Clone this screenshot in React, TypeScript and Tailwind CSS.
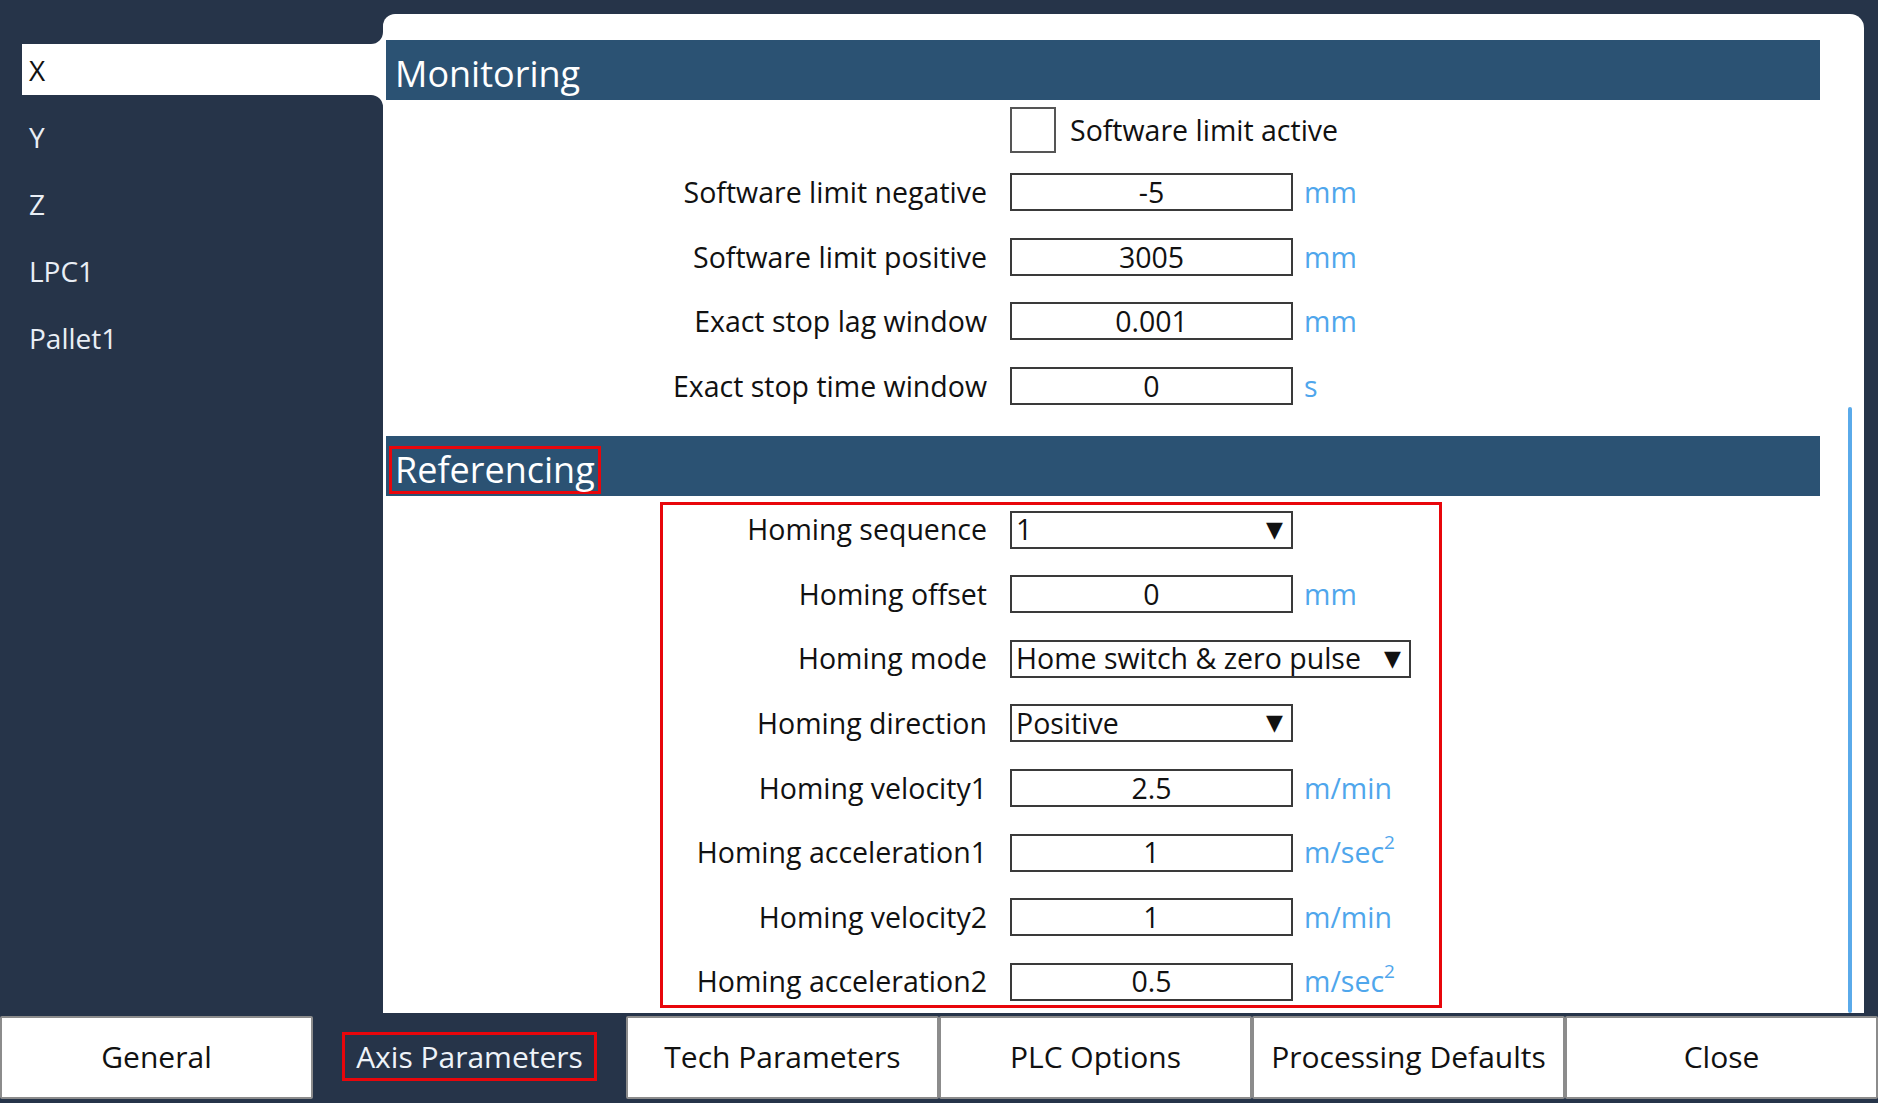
import React from "react";

const axes = ["X", "Y", "Z", "LPC1", "Pallet1"];

interface Field {
  label: string;
  value: string;
  unit?: string;
  kind?: "input" | "select";
  wide?: boolean;
}

const monitoring: Field[] = [
  { label: "Software limit negative", value: "-5", unit: "mm" },
  { label: "Software limit positive", value: "3005", unit: "mm" },
  { label: "Exact stop lag window", value: "0.001", unit: "mm" },
  { label: "Exact stop time window", value: "0", unit: "s" },
];

const referencing: Field[] = [
  { label: "Homing sequence", value: "1", kind: "select" },
  { label: "Homing offset", value: "0", unit: "mm" },
  { label: "Homing mode", value: "Home switch & zero pulse", kind: "select", wide: true },
  { label: "Homing direction", value: "Positive", kind: "select" },
  { label: "Homing velocity1", value: "2.5", unit: "m/min" },
  { label: "Homing acceleration1", value: "1", unit: "m/sec2" },
  { label: "Homing velocity2", value: "1", unit: "m/min" },
  { label: "Homing acceleration2", value: "0.5", unit: "m/sec2" },
];

const tabs = ["General", "Axis Parameters", "Tech Parameters", "PLC Options", "Processing Defaults", "Close"];

function Unit({ unit }: { unit?: string }) {
  if (!unit) return null;
  if (unit === "m/sec2") {
    return (
      <span className="ml-[11px] text-[#4fa6ec] flex items-start">
        m/sec<span className="text-[19px] leading-none mt-[2px]">2</span>
      </span>
    );
  }
  return <span className="ml-[11px] text-[#4fa6ec]">{unit}</span>;
}

function FieldRow({ field }: { field: Field }) {
  return (
    <div className="flex items-center h-[64.6px]">
      <div className="w-[601px] shrink-0 text-right text-[#111]">{field.label}</div>
      <div className="ml-[23px] flex items-center">
        {field.kind === "select" ? (
          <div
            className={`h-[38px] border-2 border-[#3a3a3a] bg-white flex items-center justify-between pl-[4px] pr-[8px] text-[#111] ${
              field.wide ? "w-[401px]" : "w-[283px]"
            }`}
          >
            <span>{field.value}</span>
            <span className="text-[22px] leading-none" style={{ fontFamily: "'DejaVu Sans', sans-serif" }}>
              ▼
            </span>
          </div>
        ) : (
          <div className="w-[283px] h-[38px] border-2 border-[#3a3a3a] bg-white flex items-center justify-center text-[#111]">
            {field.value}
          </div>
        )}
        <Unit unit={field.unit} />
      </div>
    </div>
  );
}

function SectionHeader({ title, boxed }: { title: string; boxed?: boolean }) {
  return (
    <div className="h-[60px] bg-[#2b5273] flex items-center pl-[3px] pt-[8px] text-white text-[36px]">
      <span className={boxed ? "border-[3px] border-[#e8060b] px-[3px] leading-[42px]" : "pl-[6px]"}>{title}</span>
    </div>
  );
}

function AxisItem({ name, selected }: { name: string; selected: boolean }) {
  if (!selected) {
    return (
      <div className="h-[67px] flex items-center pl-[29px] text-[#e9eef5]">{name}</div>
    );
  }
  return (
    <div className="h-[67px] py-[8px] relative">
      <div className="h-full ml-[22px] bg-white flex items-center pl-[7px] text-[#111]">{name}</div>
      {/* concave corners joining the tab into the panel */}
      <div className="absolute right-0 top-[-4px] w-[12px] h-[12px] bg-white">
        <div className="w-full h-full bg-[#263449] rounded-br-[12px]" />
      </div>
      <div className="absolute right-0 bottom-[-4px] w-[12px] h-[12px] bg-white">
        <div className="w-full h-full bg-[#263449] rounded-tr-[12px]" />
      </div>
    </div>
  );
}

export default function App() {
  return (
    <div
      className="w-[1878px] h-[1103px] bg-[#263449] flex flex-col overflow-hidden text-[28.5px]"
      style={{ fontFamily: "'Open Sans', sans-serif" }}
    >
      <div className="flex flex-1 min-h-0">
        {/* Axis list */}
        <div className="w-[383px] shrink-0 pt-[36px] text-[28px]">
          {axes.map((a, i) => (
            <AxisItem key={a} name={a} selected={i === 0} />
          ))}
        </div>

        {/* Parameter panel */}
        <div className="w-[1481px] mt-[14px] bg-white rounded-t-[14px] rounded-tl-[12px] relative pl-[3px] pr-[44px] pt-[26px]">
          <SectionHeader title="Monitoring" />
          <div className="flex items-center h-[60px]">
            <div className="w-[601px] shrink-0" />
            <div className="ml-[23px] w-[46px] h-[46px] border-2 border-[#555] bg-white" />
            <span className="ml-[14px] text-[#111]">Software limit active</span>
          </div>
          {monitoring.map((f) => (
            <FieldRow key={f.label} field={f} />
          ))}
          <div className="mt-[18px]">
            <SectionHeader title="Referencing" boxed />
          </div>
          <div className="relative mt-[1px]">
            {referencing.map((f) => (
              <FieldRow key={f.label} field={f} />
            ))}
            <div className="absolute left-[274px] top-[5px] w-[782px] h-[506px] border-[3px] border-[#e8060b] pointer-events-none" />
          </div>
          <div className="absolute right-[12px] top-[393px] bottom-0 w-[4px] rounded-full bg-[#5aaaea]" />
        </div>
      </div>

      {/* Bottom tabs */}
      <div className="h-[90px] shrink-0 grid grid-cols-6 pt-[3px] pb-[4px] text-[30px]">
        {tabs.map((t) => {
          const active = t === "Axis Parameters";
          return (
            <div
              key={t}
              className={`flex items-center justify-center pb-[3px] ${
                active
                  ? "bg-[#263449] text-[#eef3f9]"
                  : "bg-white text-[#111] border-2 border-[#8c8c8c] rounded-[2px]"
              }`}
            >
              {active ? (
                <span className="border-[3px] border-[#e8060b] px-[11px] h-[49px] flex items-center">{t}</span>
              ) : (
                t
              )}
            </div>
          );
        })}
      </div>
    </div>
  );
}
